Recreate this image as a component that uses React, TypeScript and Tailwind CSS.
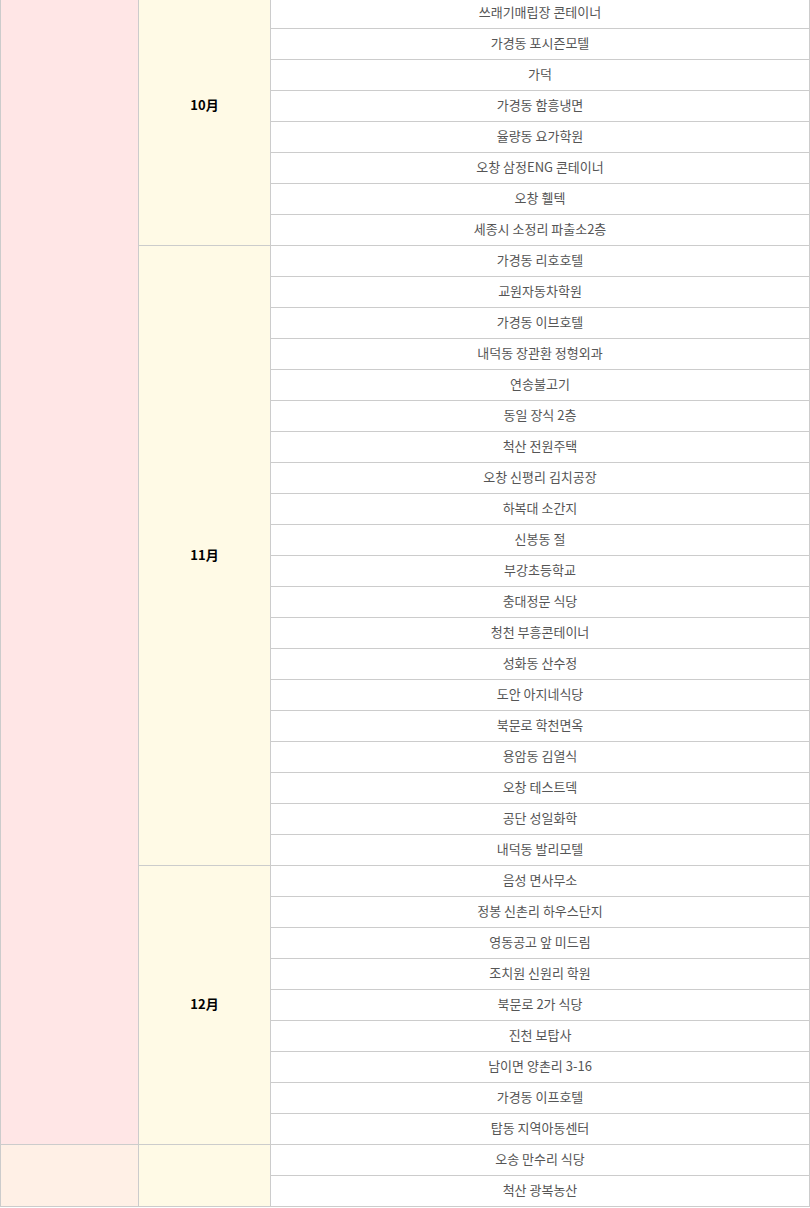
const groups: { month: string; items: string[] }[] = [
  {
    month: "10月",
    items: [
      "가경동 신축상가",
      "쓰래기매립장 콘테이너",
      "가경동 포시즌모텔",
      "가덕",
      "가경동 함흥냉면",
      "율량동 요가학원",
      "오창 삼정ENG 콘테이너",
      "오창 휄텍",
      "세종시 소정리 파출소2층",
    ],
  },
  {
    month: "11月",
    items: [
      "가경동 리호호텔",
      "교원자동차학원",
      "가경동 이브호텔",
      "내덕동 장관환 정형외과",
      "연송불고기",
      "동일 장식 2층",
      "척산 전원주택",
      "오창 신평리 김치공장",
      "하복대 소간지",
      "신봉동 절",
      "부강초등학교",
      "충대정문 식당",
      "청천 부흥콘테이너",
      "성화동 산수정",
      "도안 아지네식당",
      "북문로 학천면옥",
      "용암동 김열식",
      "오창 테스트덱",
      "공단 성일화학",
      "내덕동 발리모텔",
    ],
  },
  {
    month: "12月",
    items: [
      "음성 면사무소",
      "정봉 신촌리 하우스단지",
      "영동공고 앞 미드림",
      "조치원 신원리 학원",
      "북문로 2가 식당",
      "진천 보탑사",
      "남이면 양촌리 3-16",
      "가경동 이프호텔",
      "탑동 지역아동센터",
    ],
  },
];

// next year's first rows, only the top of the group is on screen
const nextItems = ["오송 만수리 식당", "척산 광복농산"];

const totalRows = groups.reduce((n, g) => n + g.items.length, 0);

const cell = "border border-[#cccccc] h-[31px] p-0 pb-[2px] text-center align-middle text-[#555555]";
const monthCell = "border border-[#cccccc] p-0 pb-[2px] bg-[#fffae6] text-center align-middle font-bold text-black";

export default function App() {
  return (
    <div className="w-[810px] h-[1208px] overflow-hidden bg-white font-['Noto_Sans_CJK_KR','Noto_Sans',sans-serif]">
      <table className="w-[810px] -mt-[34px] table-fixed border-collapse text-[13px] leading-[18px]">
        <colgroup>
          <col className="w-[138px]" />
          <col className="w-[132px]" />
          <col />
        </colgroup>
        <tbody>
          {groups.map((g, gi) =>
            g.items.map((item, i) => (
              <tr key={g.month + i}>
                {gi === 0 && i === 0 && (
                  <td rowSpan={totalRows} className="border border-[#cccccc] p-0 bg-[#ffe6e6]" />
                )}
                {i === 0 && (
                  <td rowSpan={g.items.length} className={monthCell}>
                    {g.month}
                  </td>
                )}
                <td className={cell}>{item}</td>
              </tr>
            ))
          )}
          {nextItems.map((item, i) => (
            <tr key={"n" + i}>
              {i === 0 && (
                <td rowSpan={nextItems.length} className="border border-[#cccccc] p-0 bg-[#fff0e6]" />
              )}
              {i === 0 && <td rowSpan={nextItems.length} className={monthCell} />}
              <td className={cell}>{item}</td>
            </tr>
          ))}
        </tbody>
      </table>
    </div>
  );
}
